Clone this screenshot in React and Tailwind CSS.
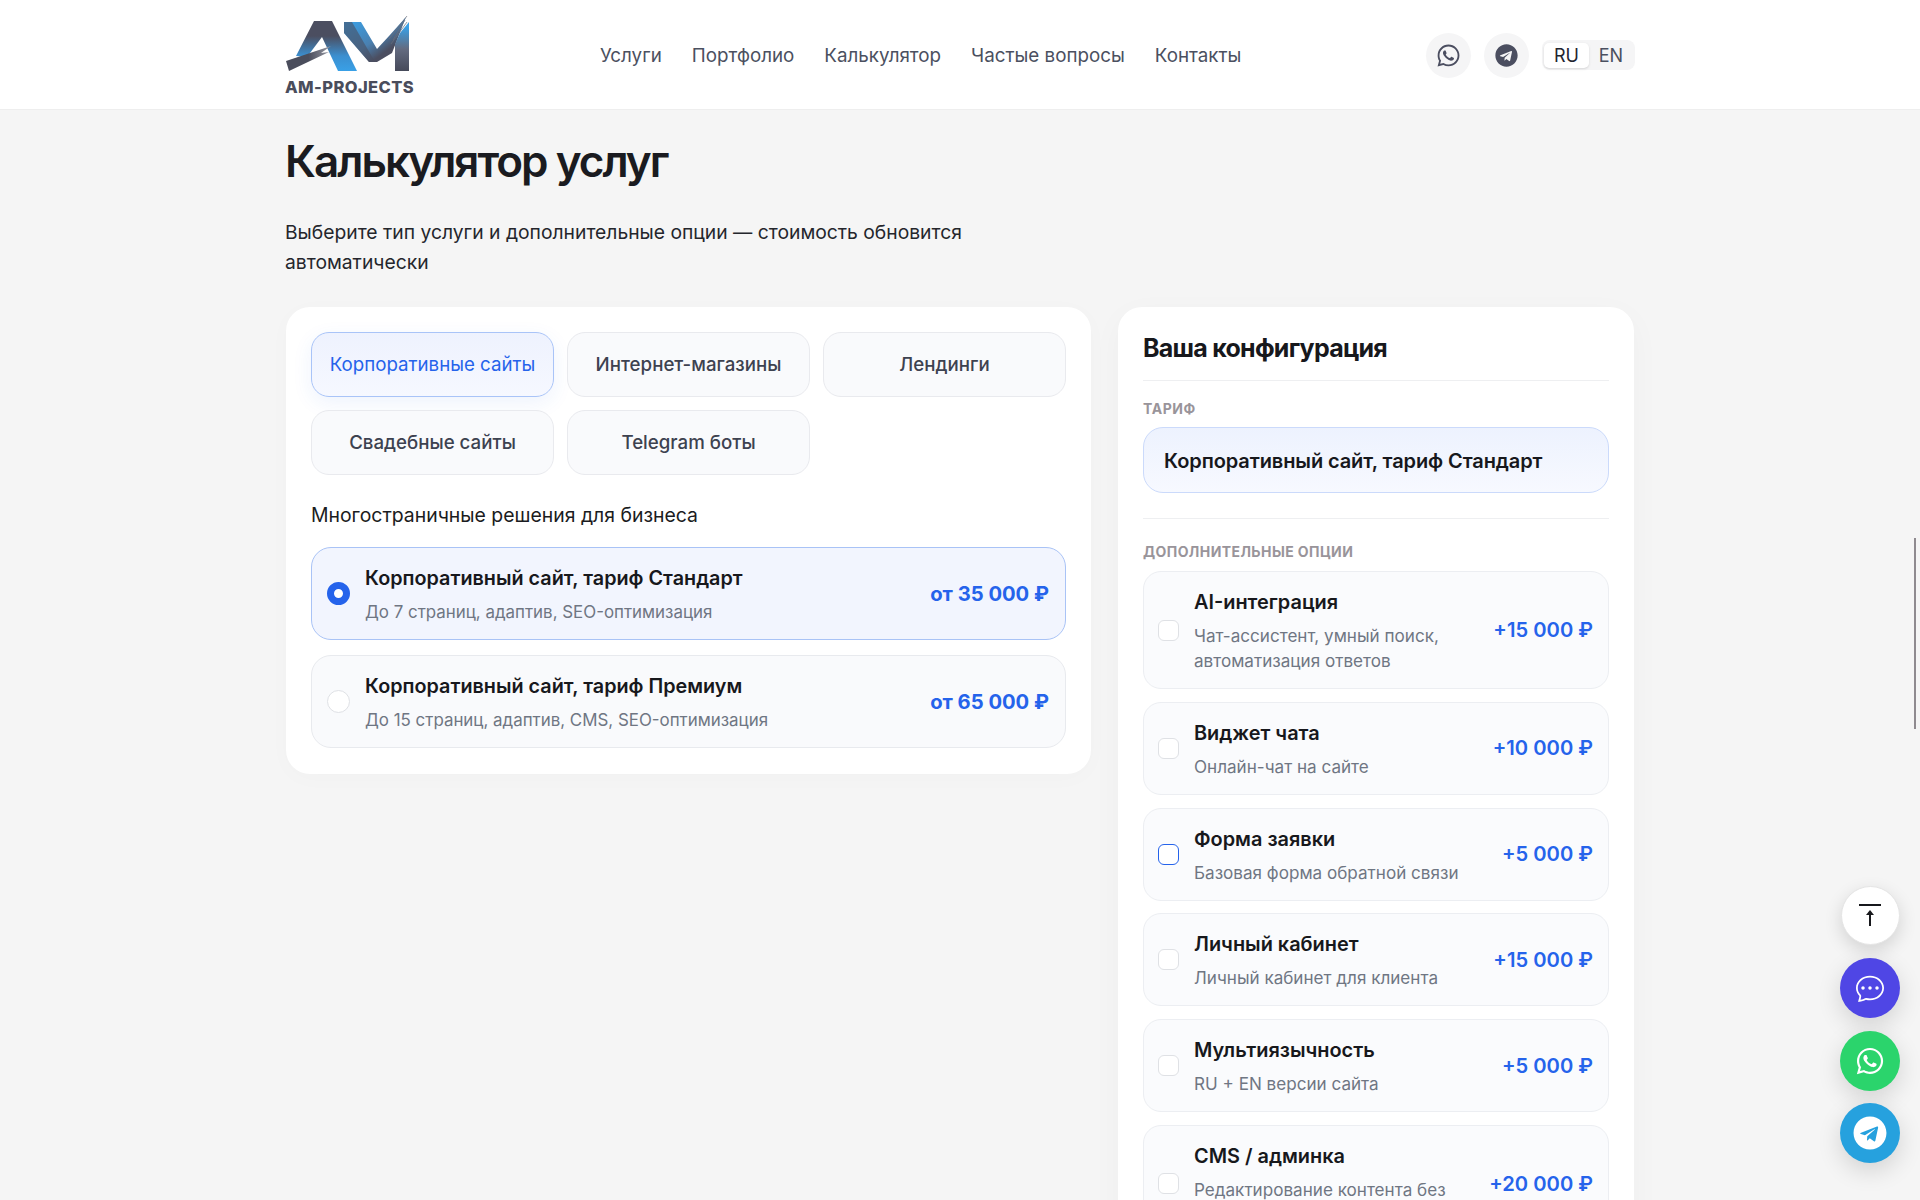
import { FaWhatsapp, FaTelegram } from 'react-icons/fa';
import { BsChatDots } from 'react-icons/bs';

const navLinks = ['Услуги', 'Портфолио', 'Калькулятор', 'Частые вопросы', 'Контакты'];
const tabs = ['Корпоративные сайты', 'Интернет-магазины', 'Лендинги', 'Свадебные сайты', 'Telegram боты'];

const plans = [
  { title: 'Корпоративный сайт, тариф Стандарт', desc: 'До 7 страниц, адаптив, SEO-оптимизация', price: 'от 35 000 ₽', selected: true },
  { title: 'Корпоративный сайт, тариф Премиум', desc: 'До 15 страниц, адаптив, CMS, SEO-оптимизация', price: 'от 65 000 ₽' },
];

const extras = [
  { title: 'AI-интеграция', desc: 'Чат-ассистент, умный поиск, автоматизация ответов', price: '+15 000 ₽' },
  { title: 'Виджет чата', desc: 'Онлайн-чат на сайте', price: '+10 000 ₽' },
  { title: 'Форма заявки', desc: 'Базовая форма обратной связи', price: '+5 000 ₽', focused: true },
  { title: 'Личный кабинет', desc: 'Личный кабинет для клиента', price: '+15 000 ₽' },
  { title: 'Мультиязычность', desc: 'RU + EN версии сайта', price: '+5 000 ₽' },
  { title: 'CMS / админка', desc: 'Редактирование контента без разработчика', price: '+20 000 ₽' },
];

function Logo() {
  return (
    <div className="flex w-[130px] flex-col">
      <svg viewBox="0 -2 130 58" className="h-[58px] w-[130px]">
        <defs>
          <linearGradient id="legA" x1="0" y1="0" x2="0" y2="1">
            <stop offset="0.3" stopColor="#4b4e60" />
            <stop offset="0.7" stopColor="#3b8fd0" />
            <stop offset="1" stopColor="#39a0e6" />
          </linearGradient>
          <linearGradient id="legM" x1="0" y1="0" x2="1" y2="1">
            <stop offset="0.1" stopColor="#3a9fe4" />
            <stop offset="0.5" stopColor="#4a80b0" />
            <stop offset="0.72" stopColor="#4b4e60" />
          </linearGradient>
          <linearGradient id="stemM" x1="0" y1="0" x2="0" y2="1">
            <stop offset="0.1" stopColor="#39a0e6" />
            <stop offset="0.55" stopColor="#636b80" />
            <stop offset="1" stopColor="#464a5a" />
          </linearGradient>
          <linearGradient id="cross" x1="0" y1="0" x2="1" y2="0">
            <stop offset="0.5" stopColor="#4a4d5c" />
            <stop offset="1" stopColor="#9a9ca6" />
          </linearGradient>
        </defs>
        <path d="M11 40L29 5H47L72 55H53L37 21L22 41Z" fill="url(#legA)" />
        <path d="M1 45L46 30L36 37L44 36L4 55Z" fill="url(#cross)" />
        <path d="M59 6H76L92 33L104 20L121 1L107 37L92 46H84L59 17Z" fill="url(#legM)" />
        <path d="M59 6H67L90 46H84L59 17Z" fill="#4a4e60" opacity="0.6" />
        <path d="M110 28L115 17L124 6V55H110Z" fill="url(#stemM)" />
        <path d="M104 23L122 0M108 24L120 4M106 28L122 6" stroke="#6c6e7a" strokeWidth="0.7" />
      </svg>
      <span className="mt-[7px] text-[16.5px] font-extrabold leading-none tracking-[0.025em] whitespace-nowrap text-[#4a4d5c]">
        AM-PROJECTS
      </span>
    </div>
  );
}

function Header() {
  return (
    <header className="h-[110px] shrink-0 border-b border-[#eeeeee] bg-white">
      <div className="mx-auto flex h-full w-[1350px] items-center">
        <Logo />
        <nav className="ml-[185px] flex gap-[30px] pt-[4px] text-[18.8px] text-[#4b5060]">
          {navLinks.map((link) => (
            <span key={link}>{link}</span>
          ))}
        </nav>
        <div className="ml-auto flex items-center gap-[13px] pt-[1px]">
          <div className="flex h-[45px] w-[45px] items-center justify-center rounded-full bg-[#f5f5f6] text-[#4b4e60]">
            <FaWhatsapp size={25} />
          </div>
          <div className="flex h-[45px] w-[45px] items-center justify-center rounded-full bg-[#f5f5f6] text-[#4b4e60]">
            <FaTelegram size={23} />
          </div>
          <div className="flex h-[30px] w-[93px] items-center rounded-[8px] bg-[#f5f5f6] p-[2px] text-[18px]">
            <span className="flex h-[25px] w-[45px] items-center justify-center rounded-[5px] bg-white text-[#1f2430] shadow-sm">RU</span>
            <span className="flex w-[44px] justify-center text-[#4b5060]">EN</span>
          </div>
        </div>
      </div>
    </header>
  );
}

function PlanRow({ plan }) {
  return (
    <div className={`flex h-[93px] items-center rounded-[20px] border pl-[15px] pr-4 ${plan.selected ? 'border-[#a9c3f6] bg-[#f2f5fe]' : 'border-[#e8eaee] bg-[#f9fafc]'}`}>
      <span className={`h-[23px] w-[23px] shrink-0 rounded-full bg-white ${plan.selected ? 'border-[7px] border-[#2563eb]' : 'border border-[#dfe1e5]'}`} />
      <div className="ml-[15px] flex-1 pt-[2px]">
        <div className="text-[19.8px] font-semibold leading-[27px] text-[#17181c]">{plan.title}</div>
        <div className="mt-[7px] text-[16.9px] leading-[26px] text-[#6f7683]">{plan.desc}</div>
      </div>
      <div className="whitespace-nowrap pt-[2px] text-[20.2px] font-bold text-[#2563eb]">{plan.price}</div>
    </div>
  );
}

function ExtraRow({ extra }) {
  return (
    <div className="flex items-center rounded-[18px] border border-[#eceef2] bg-[#fafbfd] py-[16px] pl-[14px] pr-[15px]">
      <span className={`h-[21px] w-[21px] shrink-0 rounded-[6px] bg-white border ${extra.focused ? 'border-[#2563eb]' : 'border-[#dfe1e5]'}`} />
      <div className="ml-[15px] flex-1 translate-y-[1px]">
        <div className="text-[19.9px] font-semibold leading-[27px] text-[#17181c]">{extra.title}</div>
        <div className="mt-[7px] text-[17.1px] leading-[25px] text-[#6f7683]">{extra.desc}</div>
      </div>
      <div className="ml-4 whitespace-nowrap text-[20.2px] font-semibold text-[#2563eb]">{extra.price}</div>
    </div>
  );
}

function Fabs() {
  return (
    <div className="absolute bottom-[37px] right-[20px] flex w-[60px] flex-col items-center gap-[12.5px]">
      <div className="mb-[1px] flex h-[59px] w-[59px] items-center justify-center rounded-full border border-[#e5e5e5] bg-white text-[#17181c] shadow-[0_6px_18px_rgba(0,0,0,0.14)]">
        <svg viewBox="0 0 22 22" className="h-[22px] w-[22px]" fill="none" stroke="currentColor" strokeWidth="2">
          <path d="M0 1H22" />
          <path d="M11 22V8" />
          <path d="M11 6L15 11H7Z" fill="currentColor" stroke="none" />
        </svg>
      </div>
      <div className="flex h-[60px] w-[60px] items-center justify-center rounded-full bg-[#4f46e5] text-white shadow-[0_8px_24px_rgba(0,0,0,0.14)]">
        <BsChatDots size={28} />
      </div>
      <div className="flex h-[60px] w-[60px] items-center justify-center rounded-full bg-[#2bd46c] text-white shadow-[0_8px_24px_rgba(0,0,0,0.14)]">
        <FaWhatsapp size={30} />
      </div>
      <div className="flex h-[60px] w-[60px] items-center justify-center rounded-full bg-[#26a1de] text-white shadow-[0_8px_24px_rgba(0,0,0,0.14)]">
        <FaTelegram size={34} />
      </div>
    </div>
  );
}

export default function App() {
  return (
    <div className="relative flex h-[1200px] flex-col overflow-hidden bg-[#f5f5f5] font-['Inter',sans-serif]">
      <Header />

      <main className="mx-auto w-[1350px]">
        <h1 className="mt-[26px] text-[44px] font-semibold leading-[50px] tracking-[-0.045em] text-[#1a1b20]">Калькулятор услуг</h1>
        <p className="mt-[31px] w-[700px] text-[19.3px] leading-[30px] text-[#24262c]">
          Выберите тип услуги и дополнительные опции — стоимость обновится автоматически
        </p>

        <div className="ml-[1px] mt-[30px] flex items-start gap-[27px]">
          {/* Service picker */}
          <section className="w-[805px] rounded-[24px] bg-white px-[25px] pt-[25px] pb-[26px] shadow-[0_4px_24px_rgba(0,0,0,0.02)]">
            <div className="grid grid-cols-3 gap-[13px]">
              {tabs.map((tab, i) => (
                <div
                  key={tab}
                  className={`flex h-[65px] items-center justify-center rounded-[18px] border pt-[2px] text-[18.7px] ${
                    i === 0
                      ? 'border-[#a9c4f8] bg-linear-to-b from-[#eef2fe] to-[#f6f8ff] text-[#2563eb] shadow-[0_6px_20px_rgba(37,99,235,0.08)]'
                      : 'border-[#e9eaee] bg-[#f9fafc] font-medium text-[#3d4250]'
                  }`}
                >
                  {tab}
                </div>
              ))}
            </div>
            <div className="mt-[26px] text-[19.4px] leading-[28px] text-[#1b1c21]">Многостраничные решения для бизнеса</div>
            <div className="mt-[18px] flex flex-col gap-[15px]">
              {plans.map((plan) => (
                <PlanRow key={plan.title} plan={plan} />
              ))}
            </div>
          </section>

          {/* Summary */}
          <aside className="w-[516px] rounded-[24px] bg-white px-[25px] pt-[25px] pb-[25px] shadow-[0_8px_32px_rgba(0,0,0,0.03)]">
            <h2 className="border-b border-[#eeeff1] pb-[16px] text-[25px] font-bold leading-[32px] tracking-[-0.03em] text-[#17181c]">Ваша конфигурация</h2>
            <div className="mt-[19px] text-[14px] font-bold leading-[18px] tracking-[0.04em] text-[#99949a]">ТАРИФ</div>
            <div className="mt-[9px] flex h-[66px] items-center rounded-[20px] border border-[#cbdafb] bg-linear-to-b from-[#edf2fe] to-[#f7f9ff] px-[20px] pt-[1px] text-[20px] font-semibold tracking-[-0.005em] text-[#17181c]">
              Корпоративный сайт, тариф Стандарт
            </div>
            <div className="mt-[25px] border-t border-[#eeeff1]" />
            <div className="mt-[24px] text-[14px] font-bold leading-[18px] tracking-[0.03em] text-[#99949a]">ДОПОЛНИТЕЛЬНЫЕ ОПЦИИ</div>
            <div className="mt-[10px] flex flex-col gap-[12.8px]">
              {extras.map((extra) => (
                <ExtraRow key={extra.title} extra={extra} />
              ))}
            </div>
          </aside>
        </div>
      </main>

      <Fabs />
      {/* overlay scrollbar thumb */}
      <div className="absolute right-[4px] top-[538px] h-[191px] w-[2px] bg-[#8f8a8f]" />
    </div>
  );
}
